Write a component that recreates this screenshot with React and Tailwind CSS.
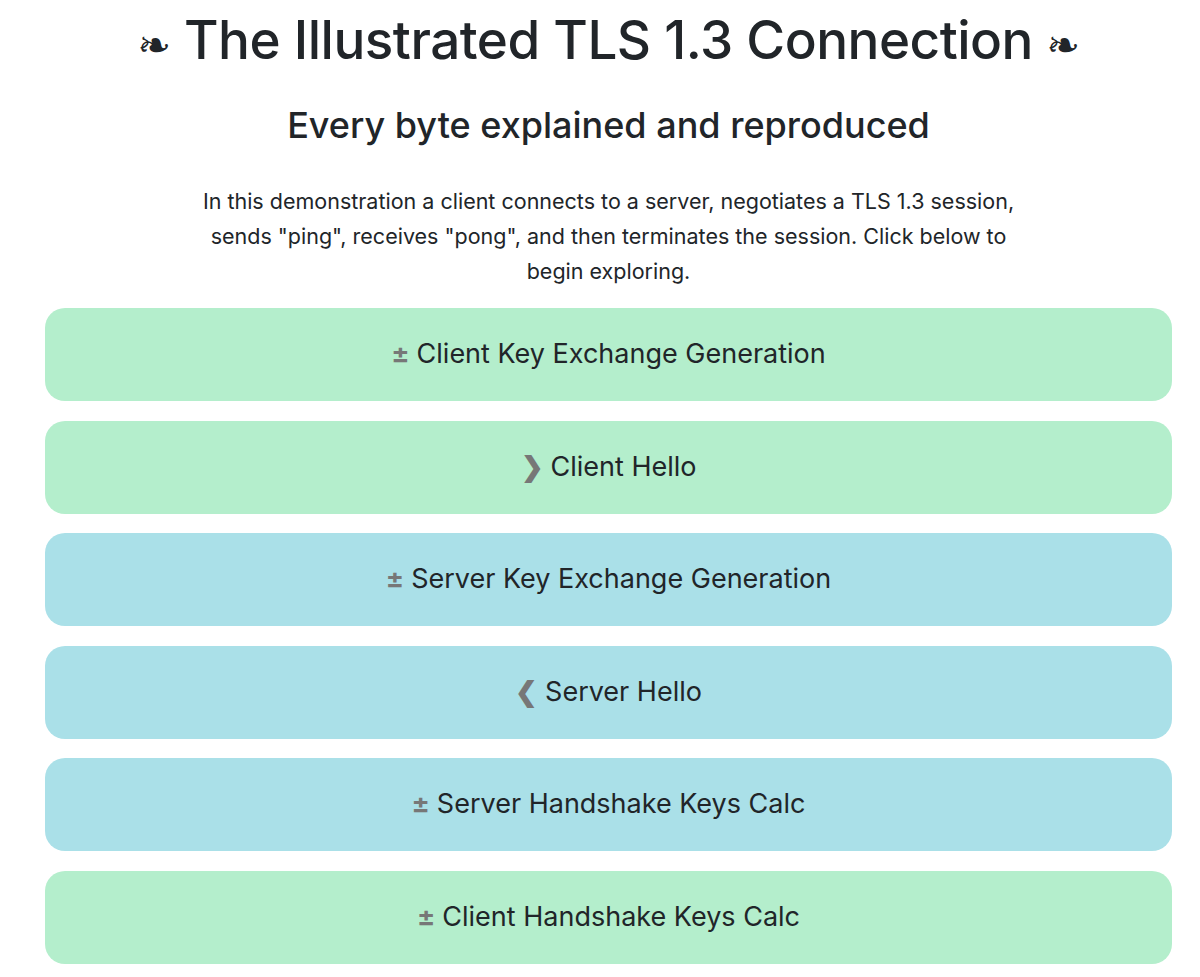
import React from 'react';

const SECTIONS = [
  { icon: '±', label: 'Client Key Exchange Generation', side: 'client' },
  { icon: '❯', label: 'Client Hello', side: 'client' },
  { icon: '±', label: 'Server Key Exchange Generation', side: 'server' },
  { icon: '❮', label: 'Server Hello', side: 'server' },
  { icon: '±', label: 'Server Handshake Keys Calc', side: 'server' },
  { icon: '±', label: 'Client Handshake Keys Calc', side: 'client' },
];

const Section = ({ icon, label, side }) => (
  <div
    className={
      'flex h-[93px] items-center justify-center rounded-[20px] text-[27px] text-[#212529] ' +
      (side === 'client' ? 'bg-[#b4eecc]' : 'bg-[#aae0e8]')
    }
  >
    <span className="mr-[7px] font-bold text-[#777777]">{icon}</span>
    {label}
  </div>
);

export default function App() {
  return (
    <div className="min-h-screen bg-white pl-[45px] pr-[28px] font-['Inter',sans-serif] text-[#212529]">
      <h1 className="pt-[6px] text-center text-[53px] leading-[68px] font-medium tracking-[-0.5px]">
        <span className="font-['DejaVu_Sans',sans-serif] text-[40px]">❧</span> The Illustrated TLS 1.3 Connection{' '}
        <span className="font-['DejaVu_Sans',sans-serif] text-[40px]">❧</span>
      </h1>
      <h2 className="mt-[24px] text-center text-[36px] leading-[44px] font-medium">
        Every byte explained and reproduced
      </h2>
      <p className="mx-auto mt-[37px] max-w-[832px] text-center text-[21.5px] leading-[35px]">
        In this demonstration a client connects to a server, negotiates a TLS 1.3 session, sends "ping", receives
        "pong", and then terminates the session. Click below to begin exploring.
      </p>
      <div className="mt-[19px] flex flex-col gap-[19.5px]">
        {SECTIONS.map((s) => (
          <Section key={s.label} {...s} />
        ))}
      </div>
    </div>
  );
}
